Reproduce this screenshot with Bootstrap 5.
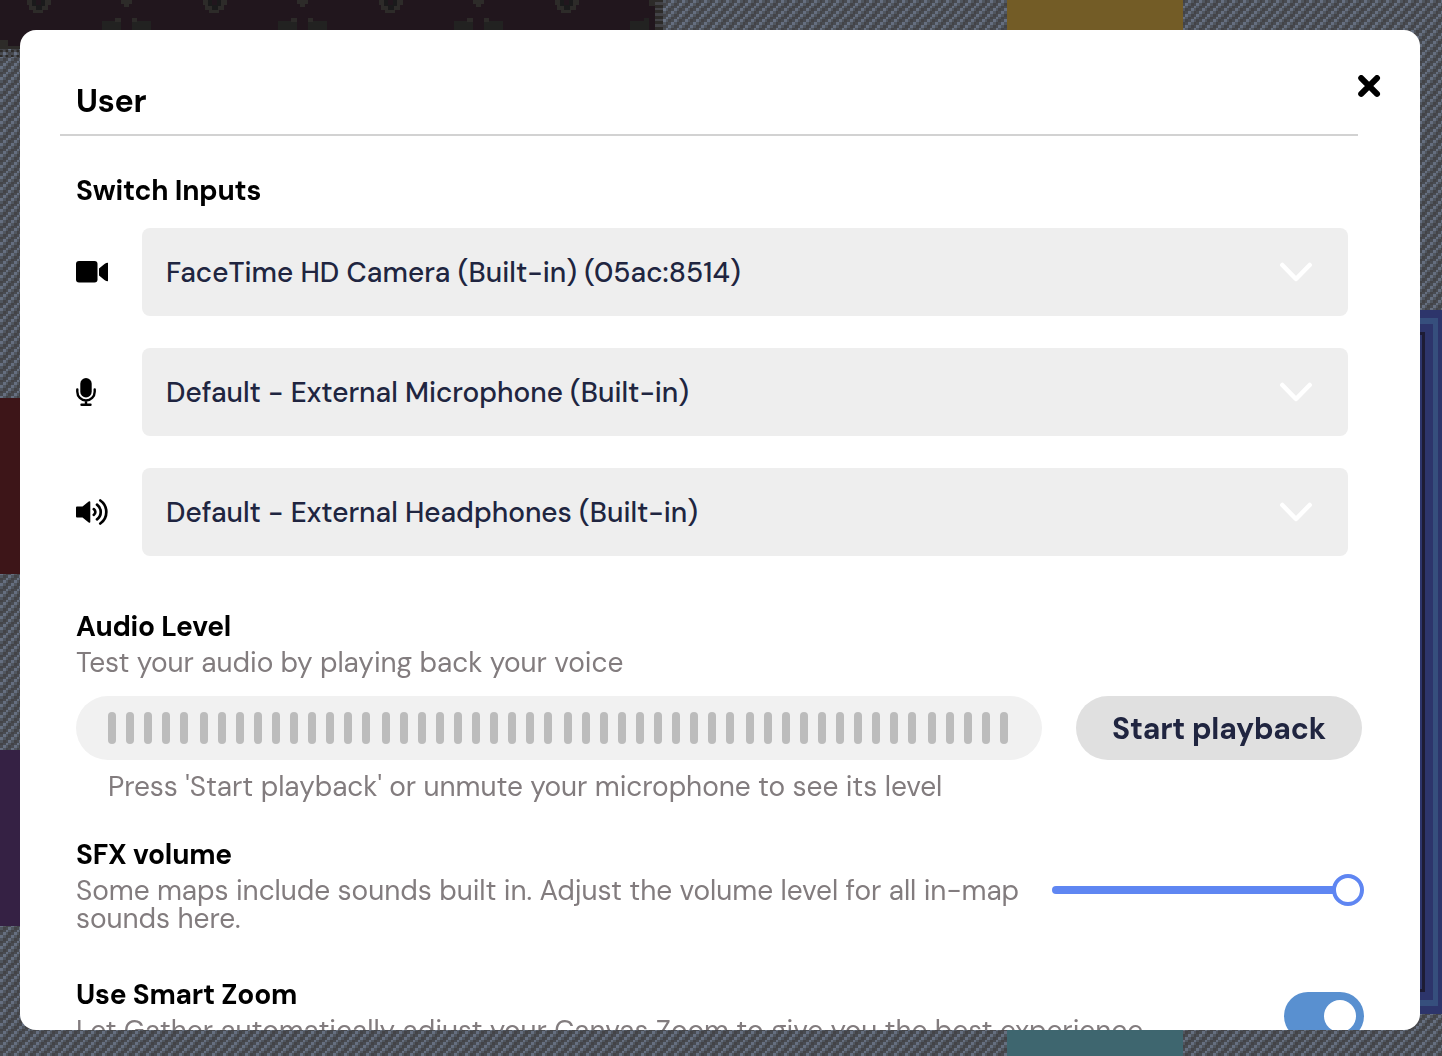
<!DOCTYPE html>
<html lang="en">
<head>
<meta charset="utf-8">
<meta name="viewport" content="width=device-width, initial-scale=1">
<title>User settings</title>
<link href="https://cdn.jsdelivr.net/npm/bootstrap@5.3.0/dist/css/bootstrap.min.css" rel="stylesheet">
<style>
body{font-family:"DM Sans",Lato,"Liberation Sans",sans-serif;font-size:28px;line-height:28px;color:#000;height:1056px}
.map{z-index:-1}
.panel{margin:30px 22px 0 20px;height:1000px;border-radius:16px;padding:40px 39px 0 40px}
.head{width:1298px;height:66px;border-bottom:2px solid #d2d2d2;padding:13px 16px 0;flex:none}
.head h1{font-size:32px;line-height:36px;font-weight:700;letter-spacing:-.25px;margin:0}
.cross{margin-top:5px;line-height:0}
.body-col{padding:0 16px;width:1318px}
h2{font-size:28px;line-height:36px;font-weight:700;letter-spacing:-.2px;margin:0;white-space:nowrap}
p{margin:0;color:#827c7e;white-space:nowrap;letter-spacing:-.042px}
.field{height:88px;margin-bottom:32px}
.field svg{flex:none}
.ico{width:66px;line-height:0}
.pick{width:1206px;background:#eee;border-radius:8px;padding:0 36px 0 24px;color:#202540;font-weight:500}
.pick span{padding-top:2px}
.s-cam{letter-spacing:.04px}
.meter{width:966px;height:64px;background:#f1f1f1;padding:0 34px 0 32px}
.meter i{width:8px;height:32px;border-radius:4px;background:#bcbcbc}
.play{width:286px;height:64px;background:#e0e0e0;color:#202540;font-weight:700;letter-spacing:-.2px;font-size:30px;border:0;padding:1px 0 0}
.track{width:312px;height:32px;margin-top:37px}
.track b{flex:1;height:8px;border-radius:4px 0 0 4px;background:#5f86f2;margin-right:-2px}
.track u{width:32px;height:32px;border:4px solid #5f86f2;background:#fff}
.toggle{width:80px;height:48px;background:#5990d0;padding:8px;margin-top:15px}
.toggle span{width:32px;height:32px;background:#fff}
</style>
<script src="https://cdn.jsdelivr.net/npm/bootstrap@5.3.0/dist/js/bootstrap.bundle.min.js"></script>
</head>
<body class="overflow-hidden">
<svg class="map position-fixed top-0 start-0" width="1442" height="1056" shape-rendering="crispEdges" aria-hidden="true">
  <defs>
    <pattern id="weave" width="4" height="4" patternUnits="userSpaceOnUse" patternTransform="scale(2.75)">
      <rect width="4" height="4" fill="#434347"/>
      <path fill="#666f80" d="M0 0h1v1H0zM3 1h1v1H3zM2 2h1v1H2zM1 3h1v1H1z"/>
      <path fill="#50565f" d="M1 0h1v1H1zM0 1h1v1H0zM3 2h1v1H3zM2 3h1v1H2z"/>
      <path fill="#484b51" d="M3 0h1v1H3zM2 1h1v1H2zM1 2h1v1H1zM0 3h1v1H0z"/>
    </pattern>
    <pattern id="fringe" width="5.5" height="5.5" patternUnits="userSpaceOnUse">
      <path fill="#2d2b29" d="M0 0h2.750v2.750H0z"/>
    </pattern>
    <g id="motif">
      <path fill="#2d2b29" d="M27 0h24v5h-3v5h-5v3H33v-3h-4V5h-2z"/><path fill="#1a1a1b" d="M32 0h13v6h-3v4h-6V6h-4z"/><path fill="#21161d" d="M36 0h5v5h-5z"/>
      <path fill="#2d2b29" d="M121 0h11v4h-3v3h-5V4h-3z"/>
      <path fill="#222221" d="M102 21h14v-3h5v12h-19zM132 18h5v3h14v9h-19z"/>
      <path fill="#2d2b29" d="M115 18h6v4h-6zM132 18h5v4h-5z"/>
    </g>
  </defs>
  <rect width="1442" height="1056" fill="url(#weave)"/>
  <path fill="#21161d" d="M0 0h656v46H0z"/>
  <path fill="#2d2b29" d="M0 40h8v6h14v3H0zM649 0h6v6h-6z"/>
  <path fill="url(#fringe)" d="M0 49h22v8H0z"/>
  <path fill="#434347" d="M655 0h8v30h-8z"/>
  <path stroke="#2d2b29" stroke-width="8" stroke-dasharray="3 2.500" d="M659 -1V30"/>
  <use href="#motif"/><use href="#motif" x="176"/><use href="#motif" x="352"/>
  <path fill="#2d2b29" d="M555 0h24v5h-3v5h-5v3h-10v-3h-4V5h-2z"/><path fill="#1a1a1b" d="M560 0h13v6h-3v4h-6V6h-4z"/><path fill="#21161d" d="M564 0h5v5h-5z"/>
  <path fill="#222221" d="M630 21h14v-3h5v12h-19z"/>
  <path fill="#735c26" d="M1007 0h176v40h-176z"/>
  <path fill="#3d1518" d="M0 398h30v176H0z"/>
  <path fill="#352144" d="M0 750h30v176H0z"/>
  <path fill="#3e666f" d="M1007 1020h176v36h-176z"/>
  <path fill="#2d356b" d="M1400 310h42v704h-42z"/>
  <path fill="#364f7d" d="M1400 318h38v688h-38z"/>
  <path fill="#2d356b" d="M1400 324h33v676h-33z"/>
  <path fill="#1d1c34" d="M1400 332h25v660h-25z"/>
  <path fill="#2d356b" d="M1400 335h22v654h-22z"/>
</svg>

<main class="panel bg-white overflow-hidden">
  <header class="d-flex justify-content-between">
    <div class="head"><h1>User</h1></div>
    <div class="cross"><svg width="23" height="23" viewBox="0 0 23 23" stroke="#000" stroke-width="6" stroke-linecap="round"><path d="M3.200 3.100l15.800 15.800M19 3.100l-15.800 15.800"/></svg></div>
  </header>
  <div class="body-col">
    <h2 style="margin-top:37px;margin-bottom:19px">Switch Inputs</h2>
    <div class="field d-flex">
      <div class="ico d-flex align-items-center"><svg width="33" height="22" viewBox="0 0 33 22"><rect width="21.500" height="21.500" rx="3"/><path d="M23 7.500L28.500 3Q30 1.700 32 1.700V20.300Q30 20.300 28.500 19L23 14.500z"/></svg></div>
      <div class="pick d-flex align-items-center justify-content-between"><span class="s-cam">FaceTime HD Camera (Built-in) (05ac:8514)</span><svg width="32" height="20" fill="none" stroke="#fff" stroke-width="4.500" stroke-linecap="round" stroke-linejoin="round"><path d="M2.300 3L16 17 29.700 3"/></svg></div>
    </div>
    <div class="field d-flex">
      <div class="ico d-flex align-items-center"><svg width="20" height="28" viewBox="0 0 20 28"><rect x="4.300" width="11.400" height="19.500" rx="5.700"/><path d="M1.300 11.500v2.300a8.700 8.700 0 0 0 17.400 0v-2.300M10 22.500v4.300M5.500 26.800h9" fill="none" stroke="#000" stroke-width="2.400" stroke-linecap="round"/></svg></div>
      <div class="pick d-flex align-items-center justify-content-between"><span>Default - External Microphone (Built-in)</span><svg width="32" height="20" fill="none" stroke="#fff" stroke-width="4.500" stroke-linecap="round" stroke-linejoin="round"><path d="M2.300 3L16 17 29.700 3"/></svg></div>
    </div>
    <div class="field d-flex">
      <div class="ico d-flex align-items-center"><svg width="33" height="26" viewBox="0 0 33 26"><path d="M1 7.600h5.500L12.700 2.500Q14.300 1.500 14.300 3.300V22.700Q14.300 24.500 12.700 23.500L6.500 18.400H1Q0 18.400 0 17.400V8.600Q0 7.600 1 7.600z"/><path d="M17.800 10.200a3.300 3.300 0 0 1 0 5.600M21 5.700a9 9 0 0 1 0 14.600M24.300 1.500a14 14 0 0 1 0 23" fill="none" stroke="#000" stroke-width="2.700" stroke-linecap="round"/></svg></div>
      <div class="pick d-flex align-items-center justify-content-between"><span>Default - External Headphones (Built-in)</span><svg width="32" height="20" fill="none" stroke="#fff" stroke-width="4.500" stroke-linecap="round" stroke-linejoin="round"><path d="M2.300 3L16 17 29.700 3"/></svg></div>
    </div>

    <h2 style="padding-top:21px;height:60px">Audio Level</h2>
    <p style="margin-top:1px">Test your audio by playing back your voice</p>
    <div class="d-flex justify-content-between" style="margin-top:19px">
      <div class="meter rounded-pill d-flex align-items-center" id="meter"></div>
      <button class="play rounded-pill">Start playback</button>
    </div>
    <p style="margin:13px 0 0 32px">Press 'Start playback' or unmute your microphone to see its level</p>

    <div class="d-flex justify-content-between" style="margin-top:36px;width:1288px">
      <div>
        <h2>SFX volume</h2>
        <p class="pt-1">Some maps include sounds built in. Adjust the volume level for all in-map<br>sounds here.</p>
      </div>
      <div class="track d-flex align-items-center"><b></b><u class="rounded-circle"></u></div>
    </div>
    <div class="d-flex justify-content-between" style="margin-top:44px;width:1288px">
      <div>
        <h2>Use Smart Zoom</h2>
        <p class="pt-1">Let Gather automatically adjust your Canvas Zoom to give you the best experience.</p>
      </div>
      <div class="toggle rounded-pill d-flex justify-content-end"><span class="rounded-circle"></span></div>
    </div>
  </div>
</main>
<script>
// 50 level bars, each snapped to an even pixel
const at = i => Math.round(i * 446 / 49) * 2;
let bars = '<i></i>';
for (let i = 1; i < 50; i++) bars += `<i style="margin-left:${at(i) - at(i - 1) - 8}px"></i>`;
document.getElementById('meter').innerHTML = bars;
</script>
</body>
</html>
